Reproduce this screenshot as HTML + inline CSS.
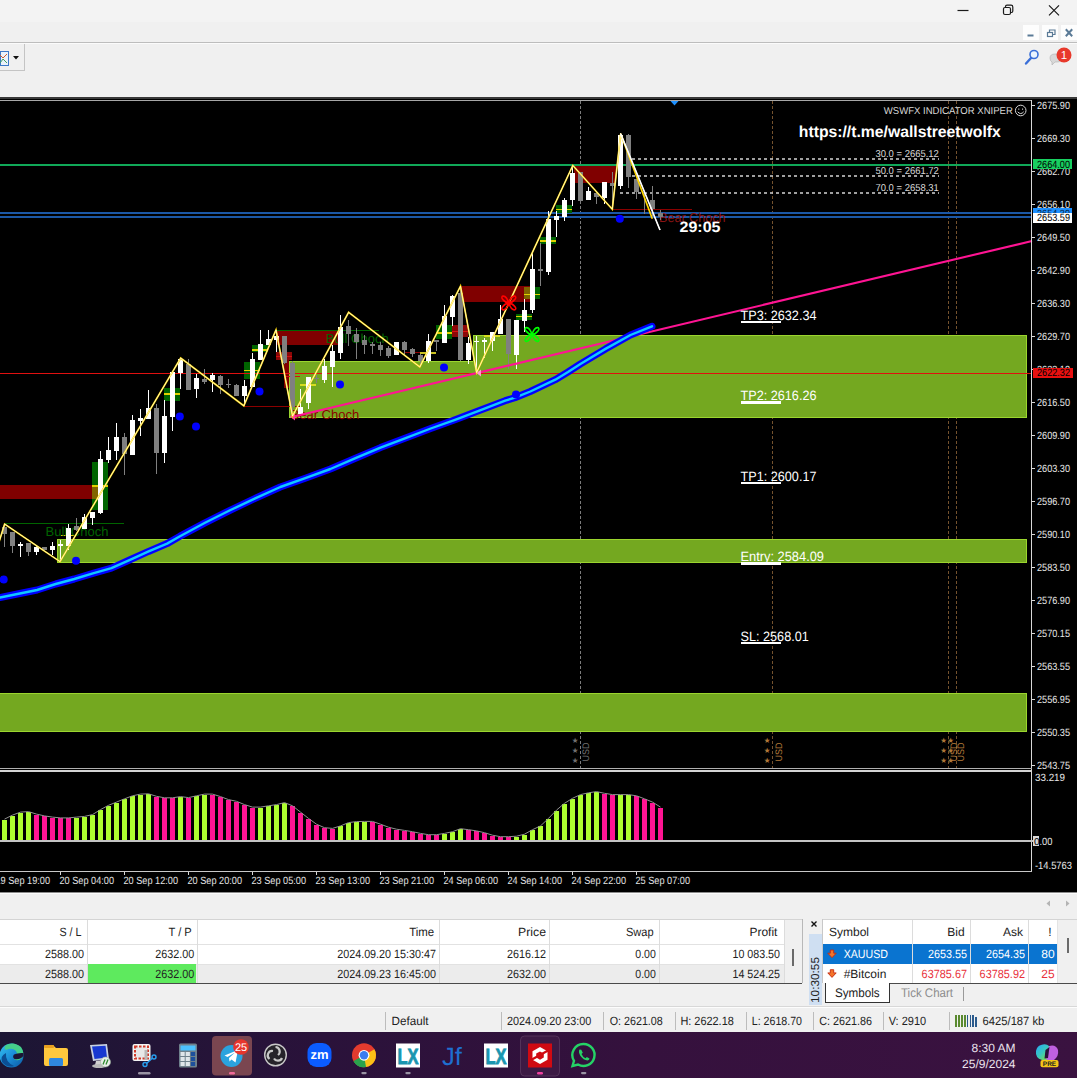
<!DOCTYPE html>
<html><head><meta charset="utf-8"><title>XAUUSD,H1</title>
<style>
html,body{margin:0;padding:0}
body{width:1077px;height:1078px;overflow:hidden;background:#f0f0f0;position:relative;font-family:"Liberation Sans",sans-serif}
svg{position:absolute;left:0;top:0}
text{font-family:"Liberation Sans",sans-serif}
.ax{font-size:10.5px;fill:#e8e8e8}
.tm{font-size:10.5px;fill:#e4e4e4}
.ui{font-size:12px;fill:#222}
.lbl{font-size:13.6px;fill:#fff}
</style></head><body>
<svg width="1077" height="1078" viewBox="0 0 1077 1078" shape-rendering="crispEdges" text-rendering="geometricPrecision">

<rect x="0" y="0" width="1077" height="22" fill="#f3f3f3"/>
<rect x="0" y="22" width="1077" height="75" fill="#f0f0f0"/>
<g stroke="#1a1a1a" stroke-width="1.2" fill="none" shape-rendering="geometricPrecision">
<path d="M957.5 10.5H968.5"/>
<rect x="1003.5" y="7.5" width="7" height="7" rx="1.5"/><path d="M1005.5 7.5V6.5Q1005.5 5.2 1007 5.2H1011Q1012.8 5.2 1012.8 7V11Q1012.8 12.5 1011.5 12.5H1010.5"/>
<path d="M1049 5.3L1059 15.3M1059 5.3L1049 15.3"/>
</g>
<rect x="1023" y="25" width="16" height="15" fill="#fdfdfd"/>
<rect x="1042" y="25" width="16" height="15" fill="#fdfdfd"/>
<rect x="1061" y="25" width="16" height="15" fill="#fdfdfd"/>
<g stroke="#5a7a96" fill="none" shape-rendering="geometricPrecision">
<path d="M1027.5 35.5H1033.5" stroke-width="2"/>
<rect x="1047.5" y="32.5" width="5" height="4" stroke-width="1.2"/><path d="M1049.5 32V30H1055V34.5H1053" stroke-width="1.2"/>
<path d="M1065.8 29.3L1072.2 36.2M1072.2 29.3L1065.8 36.2" stroke-width="2"/>
</g>
<rect x="0" y="42" width="1077" height="1" fill="#bdbdbd"/><rect x="0" y="43" width="1077" height="1" fill="#fbfbfb"/>
<path d="M0 70.5H24.5V44" stroke="#c4c4c4" fill="none"/>
<rect x="0" y="51" width="8" height="14" fill="#eaf2fb" stroke="#3d79c8"/>
<path d="M0 55L3 58L7 54" stroke="#d06030" fill="none" shape-rendering="geometricPrecision"/><path d="M0 63L3 59L7 63" stroke="#40a060" fill="none" shape-rendering="geometricPrecision"/>
<path d="M13 56H19L16 59.5Z" fill="#111" shape-rendering="geometricPrecision"/>
<g shape-rendering="geometricPrecision"><circle cx="1034" cy="54.5" r="4" fill="#eaf4ff" stroke="#3a6fd8" stroke-width="1.6"/><path d="M1031 58L1026 63.5" stroke="#3a6fd8" stroke-width="2.4" stroke-linecap="round"/></g>
<g shape-rendering="geometricPrecision"><path d="M1050 58Q1050 54 1055 54H1058Q1062 54 1062 58Q1062 62 1057 62H1055L1052 65V62Q1050 61 1050 58Z" fill="#d8d8d8" stroke="#b0b0b0" stroke-width=".6"/><circle cx="1064" cy="55" r="7.5" fill="#e8392b"/><text x="1064" y="59.2" text-anchor="middle" font-size="11.5" fill="#fff">1</text></g>
<rect x="0" y="97" width="1077" height="796" fill="#000"/>
<rect x="0" y="97" width="1077" height="2" fill="#3a3a3a"/>
<rect x="0" y="100" width="1032" height="1" fill="#a8a8a8"/>
<g id="chart">
<path d="M580.5 101V768" stroke="#7c7c7c" stroke-dasharray="3 2" fill="none"/>
<path d="M772.5 101V768" stroke="#74522e" stroke-dasharray="3 2" fill="none"/>
<path d="M948.5 101V768" stroke="#74522e" stroke-dasharray="3 2" fill="none"/>
<path d="M956.5 101V768" stroke="#74522e" stroke-dasharray="3 2" fill="none"/>
<rect x="289" y="361" width="738" height="57" fill="#74a820"/>
<rect x="473" y="335" width="554" height="83" fill="#74a820"/>
<rect x="57" y="539" width="970" height="24" fill="#74a820"/>
<rect x="0" y="693" width="1027" height="39" fill="#74a820"/>
<path d="M289 418V361.5H473M473 361V335.5H1027M1026.5 335V418M289 417.5H1027" stroke="#9bd52e" fill="none"/>
<path d="M57.5 563V539.5H1026.5V563M57 562.5H1027" stroke="#9bd52e" fill="none"/>
<path d="M0 693.5H1026.5V732M0 731.5H1027" stroke="#9bd52e" fill="none"/>
<rect x="0" y="164.2" width="1032" height="1.7" fill="#10a858"/>
<rect x="0" y="212.2" width="1032" height="1.6" fill="#1c58a6"/>
<rect x="0" y="216.4" width="1032" height="1.6" fill="#1c58a6"/>
<path d="M626 159H939" stroke="#d4d4d4" stroke-width="1.7" stroke-dasharray="3 3" fill="none" shape-rendering="geometricPrecision"/>
<path d="M626 176H939" stroke="#d4d4d4" stroke-width="1.7" stroke-dasharray="3 3" fill="none" shape-rendering="geometricPrecision"/>
<path d="M620 193H939" stroke="#d4d4d4" stroke-width="1.7" stroke-dasharray="3 3" fill="none" shape-rendering="geometricPrecision"/>
<rect x="0" y="485" width="98" height="13.5" fill="#800000"/>
<rect x="277" y="330.5" width="60.5" height="14.0" fill="#800000"/>
<rect x="461" y="285.7" width="68.5" height="15.800000000000011" fill="#800000"/>
<rect x="573.5" y="166" width="42.5" height="16.5" fill="#800000"/>
<rect x="276" y="352" width="16" height="8" fill="#8c0808"/><rect x="276" y="356" width="16" height="1.4" fill="#d01010"/>
<rect x="452" y="325" width="16" height="11.5" fill="#8c0808"/><rect x="452" y="331" width="16" height="1.4" fill="#e01010"/>
<rect x="92" y="461.5" width="16" height="48.0" fill="#006400"/>
<rect x="164" y="387.5" width="16" height="13.0" fill="#006400"/>
<rect x="244" y="361.5" width="16" height="17.0" fill="#006400"/>
<rect x="252" y="345.3" width="16" height="6.699999999999989" fill="#006400"/>
<rect x="436" y="325" width="16" height="14" fill="#006400"/>
<rect x="516" y="314" width="16" height="5.800000000000011" fill="#006400"/>
<rect x="524" y="287" width="16" height="12.199999999999989" fill="#006400"/>
<rect x="540" y="236.5" width="16" height="7.5" fill="#006400"/>
<rect x="556" y="205" width="16" height="7.699999999999989" fill="#006400"/>
<rect x="92" y="485" width="6" height="13.5" fill="#806400"/>
<rect x="524" y="287" width="5.5" height="12.2" fill="#806400"/>
<rect x="92" y="485.4" width="16" height="1.3" fill="#e0d000"/>
<rect x="164" y="393.4" width="16" height="1.3" fill="#e0d000"/>
<rect x="244" y="369.59999999999997" width="16" height="1.3" fill="#e0d000"/>
<rect x="252" y="349.4" width="16" height="1.3" fill="#e0d000"/>
<rect x="436" y="332.4" width="16" height="1.3" fill="#e0d000"/>
<rect x="516" y="315.9" width="16" height="1.3" fill="#e0d000"/>
<rect x="524" y="293.7" width="16" height="1.3" fill="#e0d000"/>
<rect x="540" y="240.4" width="16" height="1.3" fill="#e0d000"/>
<rect x="556" y="208.6" width="16" height="1.3" fill="#e0d000"/>
<rect x="61" y="534.6" width="15" height="1.3" fill="#e0d000"/>
<rect x="300" y="384.2" width="16" height="1.6" fill="#d8dc20"/>
<rect x="420" y="352" width="16" height="1.6" fill="#c8c020"/><rect x="405" y="352" width="15" height="1.4" fill="#900000"/>
<rect x="484" y="335" width="16" height="1.6" fill="#d8dc20"/>
<rect x="5" y="522.5" width="119" height="1.3" fill="#006400"/>
<rect x="277" y="330" width="102" height="1.3" fill="#006400"/>
<rect x="244" y="405.5" width="57" height="1.3" fill="#8b0000"/>
<rect x="284" y="360" width="5" height="28" fill="#800000"/><rect x="284.5" y="375.8" width="15.5" height="1.3" fill="#d01010"/>
<rect x="612" y="208.6" width="80" height="1.3" fill="#8b0000"/>
<g shape-rendering="geometricPrecision" font-size="13">
<text x="45.5" y="535.6" fill="#006400">Bull Choch</text>
<text x="325.8" y="343.4" fill="#006400">Bull Choch</text>
<text x="290.5" y="418.6" fill="#8b0000">Bear Choch</text>
<text x="659" y="222" fill="#8b1414" textLength="66.5" lengthAdjust="spacingAndGlyphs">Bear Choch</text>
</g>
<rect x="0" y="372.6" width="1032" height="1.4" fill="#e01010"/>
<rect x="3.5" y="524.0" width="1" height="23.0" fill="#808080"/>
<rect x="1.5" y="527.3" width="5" height="6.5" fill="#808080"/>
<rect x="11.5" y="532.0" width="1" height="21.3" fill="#808080"/>
<rect x="9.5" y="532.0" width="5" height="13.8" fill="#808080"/>
<rect x="19.5" y="541.8" width="1" height="15.2" fill="#ffffff"/>
<rect x="17.5" y="544.0" width="5" height="1.8" fill="#ffffff"/>
<rect x="27.5" y="542.7" width="1" height="13.3" fill="#808080"/>
<rect x="25.5" y="542.7" width="5" height="9.6" fill="#808080"/>
<rect x="35.5" y="545.8" width="1" height="9.2" fill="#ffffff"/>
<rect x="33.5" y="546.8" width="5" height="5.5" fill="#ffffff"/>
<rect x="43.5" y="546.8" width="1" height="2.8" fill="#808080"/>
<rect x="41.5" y="546.8" width="5" height="2.8" fill="#808080"/>
<rect x="51.5" y="542.0" width="1" height="13.0" fill="#ffffff"/>
<rect x="49.5" y="545.8" width="5" height="3.8" fill="#ffffff"/>
<rect x="59.5" y="540.3" width="1" height="21.3" fill="#ffffff"/>
<rect x="57.5" y="544.0" width="5" height="1.5" fill="#ffffff"/>
<rect x="67.5" y="523.6" width="1" height="26.0" fill="#ffffff"/>
<rect x="65.5" y="528.2" width="5" height="17.6" fill="#ffffff"/>
<rect x="75.5" y="518.0" width="1" height="13.0" fill="#808080"/>
<rect x="73.5" y="526.4" width="5" height="3.6" fill="#808080"/>
<rect x="83.5" y="514.0" width="1" height="15.0" fill="#ffffff"/>
<rect x="81.5" y="517.0" width="5" height="12.0" fill="#ffffff"/>
<rect x="91.5" y="512.4" width="1" height="12.1" fill="#ffffff"/>
<rect x="89.5" y="512.4" width="5" height="5.6" fill="#ffffff"/>
<rect x="99.5" y="450.7" width="1" height="63.6" fill="#ffffff"/>
<rect x="97.5" y="458.7" width="5" height="54.7" fill="#ffffff"/>
<rect x="107.5" y="436.5" width="1" height="26.0" fill="#ffffff"/>
<rect x="105.5" y="449.5" width="5" height="10.2" fill="#ffffff"/>
<rect x="115.5" y="422.6" width="1" height="37.1" fill="#ffffff"/>
<rect x="113.5" y="436.9" width="5" height="14.4" fill="#ffffff"/>
<rect x="123.5" y="432.8" width="1" height="41.8" fill="#808080"/>
<rect x="121.5" y="436.5" width="5" height="17.5" fill="#808080"/>
<rect x="131.5" y="414.8" width="1" height="39.7" fill="#ffffff"/>
<rect x="129.5" y="419.8" width="5" height="34.7" fill="#ffffff"/>
<rect x="139.5" y="408.6" width="1" height="27.0" fill="#ffffff"/>
<rect x="137.5" y="418.0" width="5" height="2.7" fill="#ffffff"/>
<rect x="147.5" y="389.7" width="1" height="29.1" fill="#ffffff"/>
<rect x="145.5" y="407.7" width="5" height="11.1" fill="#ffffff"/>
<rect x="155.5" y="404.0" width="1" height="69.6" fill="#808080"/>
<rect x="153.5" y="407.7" width="5" height="45.5" fill="#808080"/>
<rect x="163.5" y="400.3" width="1" height="62.2" fill="#ffffff"/>
<rect x="161.5" y="416.0" width="5" height="37.2" fill="#ffffff"/>
<rect x="171.5" y="372.4" width="1" height="58.6" fill="#ffffff"/>
<rect x="169.5" y="372.4" width="5" height="44.2" fill="#ffffff"/>
<rect x="179.5" y="358.5" width="1" height="30.5" fill="#ffffff"/>
<rect x="177.5" y="359.4" width="5" height="13.4" fill="#ffffff"/>
<rect x="187.5" y="359.4" width="1" height="30.3" fill="#808080"/>
<rect x="185.5" y="364.0" width="5" height="25.7" fill="#808080"/>
<rect x="195.5" y="374.3" width="1" height="23.2" fill="#ffffff"/>
<rect x="193.5" y="377.6" width="5" height="11.4" fill="#ffffff"/>
<rect x="203.5" y="368.7" width="1" height="14.9" fill="#808080"/>
<rect x="201.5" y="379.0" width="5" height="2.7" fill="#808080"/>
<rect x="211.5" y="373.4" width="1" height="18.1" fill="#ffffff"/>
<rect x="209.5" y="375.2" width="5" height="4.7" fill="#ffffff"/>
<rect x="219.5" y="375.0" width="1" height="18.8" fill="#808080"/>
<rect x="217.5" y="376.0" width="5" height="9.4" fill="#808080"/>
<rect x="227.5" y="379.0" width="1" height="9.0" fill="#808080"/>
<rect x="225.5" y="384.0" width="5" height="1.4" fill="#808080"/>
<rect x="235.5" y="383.6" width="1" height="12.0" fill="#808080"/>
<rect x="233.5" y="385.4" width="5" height="10.2" fill="#808080"/>
<rect x="243.5" y="380.0" width="1" height="25.6" fill="#ffffff"/>
<rect x="241.5" y="386.0" width="5" height="10.0" fill="#ffffff"/>
<rect x="251.5" y="353.0" width="1" height="33.5" fill="#ffffff"/>
<rect x="249.5" y="359.0" width="5" height="27.5" fill="#ffffff"/>
<rect x="259.5" y="330.4" width="1" height="29.6" fill="#ffffff"/>
<rect x="257.5" y="344.0" width="5" height="16.0" fill="#ffffff"/>
<rect x="267.5" y="330.4" width="1" height="14.8" fill="#ffffff"/>
<rect x="265.5" y="339.0" width="5" height="6.2" fill="#ffffff"/>
<rect x="275.5" y="330.0" width="1" height="22.0" fill="#ffffff"/>
<rect x="273.5" y="336.0" width="5" height="4.0" fill="#ffffff"/>
<rect x="283.5" y="336.0" width="1" height="28.0" fill="#808080"/>
<rect x="281.5" y="336.0" width="5" height="27.0" fill="#808080"/>
<rect x="291.5" y="361.0" width="1" height="55.7" fill="#808080"/>
<rect x="289.5" y="363.0" width="5" height="43.5" fill="#808080"/>
<rect x="299.5" y="388.8" width="1" height="25.2" fill="#ffffff"/>
<rect x="297.5" y="406.5" width="5" height="7.5" fill="#ffffff"/>
<rect x="307.5" y="376.8" width="1" height="32.5" fill="#ffffff"/>
<rect x="305.5" y="376.8" width="5" height="26.0" fill="#ffffff"/>
<rect x="315.5" y="375.0" width="1" height="8.3" fill="#808080"/>
<rect x="313.5" y="377.7" width="5" height="1.2" fill="#808080"/>
<rect x="323.5" y="359.0" width="1" height="24.3" fill="#ffffff"/>
<rect x="321.5" y="365.6" width="5" height="14.0" fill="#ffffff"/>
<rect x="331.5" y="345.2" width="1" height="41.8" fill="#ffffff"/>
<rect x="329.5" y="350.8" width="5" height="15.8" fill="#ffffff"/>
<rect x="339.5" y="314.6" width="1" height="44.4" fill="#ffffff"/>
<rect x="337.5" y="326.6" width="5" height="26.0" fill="#ffffff"/>
<rect x="347.5" y="320.0" width="1" height="26.0" fill="#808080"/>
<rect x="345.5" y="325.7" width="5" height="8.3" fill="#808080"/>
<rect x="355.5" y="327.6" width="1" height="31.4" fill="#808080"/>
<rect x="353.5" y="334.0" width="5" height="7.5" fill="#808080"/>
<rect x="363.5" y="335.0" width="1" height="18.6" fill="#808080"/>
<rect x="361.5" y="339.6" width="5" height="5.6" fill="#808080"/>
<rect x="371.5" y="341.5" width="1" height="12.1" fill="#808080"/>
<rect x="369.5" y="344.3" width="5" height="1.7" fill="#808080"/>
<rect x="379.5" y="341.5" width="1" height="14.9" fill="#808080"/>
<rect x="377.5" y="345.2" width="5" height="4.7" fill="#808080"/>
<rect x="387.5" y="346.0" width="1" height="12.0" fill="#808080"/>
<rect x="385.5" y="348.0" width="5" height="8.4" fill="#808080"/>
<rect x="395.5" y="341.5" width="1" height="13.9" fill="#ffffff"/>
<rect x="393.5" y="342.4" width="5" height="13.0" fill="#ffffff"/>
<rect x="403.5" y="340.6" width="1" height="14.8" fill="#808080"/>
<rect x="401.5" y="342.4" width="5" height="7.5" fill="#808080"/>
<rect x="411.5" y="348.0" width="1" height="9.3" fill="#808080"/>
<rect x="409.5" y="349.0" width="5" height="4.6" fill="#808080"/>
<rect x="419.5" y="353.6" width="1" height="13.0" fill="#808080"/>
<rect x="417.5" y="355.0" width="5" height="6.0" fill="#808080"/>
<rect x="427.5" y="334.3" width="1" height="28.3" fill="#ffffff"/>
<rect x="425.5" y="340.5" width="5" height="20.2" fill="#ffffff"/>
<rect x="435.5" y="340.4" width="1" height="10.8" fill="#808080"/>
<rect x="433.5" y="340.4" width="5" height="1.9" fill="#808080"/>
<rect x="443.5" y="305.3" width="1" height="37.2" fill="#ffffff"/>
<rect x="441.5" y="315.6" width="5" height="26.9" fill="#ffffff"/>
<rect x="451.5" y="294.6" width="1" height="31.4" fill="#ffffff"/>
<rect x="449.5" y="295.5" width="5" height="21.4" fill="#ffffff"/>
<rect x="459.5" y="286.2" width="1" height="75.2" fill="#808080"/>
<rect x="457.5" y="292.7" width="5" height="66.9" fill="#808080"/>
<rect x="467.5" y="337.3" width="1" height="26.9" fill="#ffffff"/>
<rect x="465.5" y="342.9" width="5" height="16.7" fill="#ffffff"/>
<rect x="475.5" y="336.4" width="1" height="37.1" fill="#ffffff"/>
<rect x="473.5" y="341.0" width="5" height="1.3" fill="#ffffff"/>
<rect x="483.5" y="338.2" width="1" height="19.5" fill="#ffffff"/>
<rect x="481.5" y="340.4" width="5" height="1.9" fill="#ffffff"/>
<rect x="491.5" y="331.7" width="1" height="19.5" fill="#ffffff"/>
<rect x="489.5" y="331.7" width="5" height="9.3" fill="#ffffff"/>
<rect x="499.5" y="304.8" width="1" height="28.8" fill="#ffffff"/>
<rect x="497.5" y="318.7" width="5" height="14.9" fill="#ffffff"/>
<rect x="507.5" y="318.7" width="1" height="50.1" fill="#808080"/>
<rect x="505.5" y="318.7" width="5" height="35.3" fill="#808080"/>
<rect x="515.5" y="319.6" width="1" height="49.2" fill="#ffffff"/>
<rect x="513.5" y="319.6" width="5" height="35.4" fill="#ffffff"/>
<rect x="523.5" y="299.2" width="1" height="32.5" fill="#ffffff"/>
<rect x="521.5" y="309.8" width="5" height="10.8" fill="#ffffff"/>
<rect x="531.5" y="252.3" width="1" height="60.7" fill="#ffffff"/>
<rect x="529.5" y="268.6" width="5" height="41.8" fill="#ffffff"/>
<rect x="539.5" y="243.0" width="1" height="43.0" fill="#808080"/>
<rect x="537.5" y="268.6" width="5" height="2.2" fill="#808080"/>
<rect x="547.5" y="210.5" width="1" height="64.1" fill="#ffffff"/>
<rect x="545.5" y="218.8" width="5" height="53.0" fill="#ffffff"/>
<rect x="555.5" y="211.4" width="1" height="26.0" fill="#ffffff"/>
<rect x="553.5" y="215.5" width="5" height="4.3" fill="#ffffff"/>
<rect x="563.5" y="197.5" width="1" height="23.2" fill="#ffffff"/>
<rect x="561.5" y="200.3" width="5" height="16.7" fill="#ffffff"/>
<rect x="571.5" y="166.0" width="1" height="39.8" fill="#ffffff"/>
<rect x="569.5" y="172.8" width="5" height="27.5" fill="#ffffff"/>
<rect x="579.5" y="171.5" width="1" height="32.5" fill="#808080"/>
<rect x="577.5" y="172.4" width="5" height="28.8" fill="#808080"/>
<rect x="587.5" y="187.3" width="1" height="12.7" fill="#ffffff"/>
<rect x="585.5" y="191.0" width="5" height="9.0" fill="#ffffff"/>
<rect x="595.5" y="191.0" width="1" height="13.0" fill="#808080"/>
<rect x="593.5" y="192.9" width="5" height="3.7" fill="#808080"/>
<rect x="603.5" y="181.7" width="1" height="22.3" fill="#ffffff"/>
<rect x="601.5" y="181.7" width="5" height="15.8" fill="#ffffff"/>
<rect x="611.5" y="171.5" width="1" height="38.1" fill="#808080"/>
<rect x="609.5" y="182.6" width="5" height="3.8" fill="#808080"/>
<rect x="619.5" y="133.4" width="1" height="55.6" fill="#ffffff"/>
<rect x="617.5" y="135.3" width="5" height="51.1" fill="#ffffff"/>
<rect x="627.5" y="134.4" width="1" height="53.8" fill="#808080"/>
<rect x="625.5" y="135.3" width="5" height="41.7" fill="#808080"/>
<rect x="635.5" y="179.0" width="1" height="19.5" fill="#808080"/>
<rect x="633.5" y="179.0" width="5" height="13.4" fill="#808080"/>
<rect x="643.5" y="192.0" width="1" height="22.0" fill="#808080"/>
<rect x="641.5" y="192.0" width="5" height="1.2" fill="#808080"/>
<rect x="651.5" y="186.4" width="1" height="29.6" fill="#808080"/>
<rect x="649.5" y="199.7" width="5" height="9.6" fill="#808080"/>
<rect x="659.5" y="209.5" width="1" height="10.5" fill="#808080"/>
<rect x="657.5" y="213.0" width="5" height="3.5" fill="#808080"/>
<g shape-rendering="geometricPrecision">
<path d="M293 416.7L1032 241" stroke="#ff1493" stroke-width="2.1" fill="none"/>
<path d="M290 416.5L295 412.5L295 420.5Z" fill="#ff3aa0"/><path d="M476.5 373L481 369.5L481 376.5Z" fill="#ff9ad0"/>
<polyline points="-2,598 0,597.5 18.6,593.8 37.1,590 55.7,584 74.3,579 92.9,573.3 111.4,568.1 130,559.8 148.6,551.4 167.1,543.6 180,536.2 205,522.8 230,510.3 255.2,498.3 280.3,487 305.3,478.2 330.4,469 355.5,458.2 380.5,447.6 405.6,438.1 430.7,428.5 455,419.8 480,410.3 505.2,400.7 515,397.7 530.3,391.5 555.3,379.7 568,372 580.4,364 605.5,348.9 630.5,335 652,326.3" stroke="#0000ff" stroke-width="7" fill="none" stroke-linejoin="round" stroke-linecap="round"/>
<polyline points="-2,598 0,597.5 18.6,593.8 37.1,590 55.7,584 74.3,579 92.9,573.3 111.4,568.1 130,559.8 148.6,551.4 167.1,543.6 180,536.2 205,522.8 230,510.3 255.2,498.3 280.3,487 305.3,478.2 330.4,469 355.5,458.2 380.5,447.6 405.6,438.1 430.7,428.5 455,419.8 480,410.3 505.2,400.7 515,397.7 530.3,391.5 555.3,379.7 568,372 580.4,364 605.5,348.9 630.5,335 652,326.3" stroke="#10c8ff" stroke-width="2.4" fill="none" stroke-linejoin="round" stroke-linecap="round"/>
<polyline points="-4,552 4.6,524 60,561.6 180.7,358 243.8,405.8 276,329.8 292.5,416 348.6,312.3 419.8,367 460.5,286.2 476.6,372.6 572.8,165.4 612.3,209.2 620.7,133.8 652.3,218.8" stroke="#ffd700" stroke-width="1.7" fill="none" stroke-linejoin="miter"/>
<polyline points="-4,552 4.6,524 60,561.6 180.7,358 243.8,405.8 276,329.8 292.5,416 348.6,312.3 419.8,367 460.5,286.2 476.6,372.6 572.8,165.4 612.3,209.2 620.7,133.8 660,230" stroke="#fffbe0" stroke-width=".8" fill="none"/>
<path d="M620.7 133.8L660 230" stroke="#ffffff" stroke-width="1.6" fill="none"/>
<circle cx="3.7" cy="579.6" r="4" fill="#0000ff"/>
<circle cx="76" cy="560.7" r="4" fill="#0000ff"/>
<circle cx="179.8" cy="416.6" r="4" fill="#0000ff"/>
<circle cx="196" cy="426.6" r="4" fill="#0000ff"/>
<circle cx="259.5" cy="391.5" r="4" fill="#0000ff"/>
<circle cx="340" cy="384.6" r="4" fill="#0000ff"/>
<circle cx="444" cy="367.5" r="4" fill="#0000ff"/>
<circle cx="516" cy="394.5" r="4" fill="#0000ff"/>
<circle cx="619.8" cy="218.8" r="4" fill="#0000ff"/>
<g transform="translate(508.8,303) scale(1.02,1.22)" stroke="#ff0000" stroke-width="1.5" fill="none"><path d="M0 0C-3 -8,-9 -6,-6 -3C-4 -1,-2 0,0 0C3 -8,9 -6,6 -3C4 -1,2 0,0 0C-3 8,-9 6,-6 3C-4 1,-2 0,0 0C3 8,9 6,6 3C4 1,2 0,0 0"/></g>
<g transform="translate(532,334.5) scale(1.02,1.22)" stroke="#00ff00" stroke-width="1.5" fill="none"><path d="M0 0C-3 -8,-9 -6,-6 -3C-4 -1,-2 0,0 0C3 -8,9 -6,6 -3C4 -1,2 0,0 0C-3 8,-9 6,-6 3C-4 1,-2 0,0 0C3 8,9 6,6 3C4 1,2 0,0 0"/></g>
<path d="M670.5 101H678.5L674.5 105.5Z" fill="#1e90ff"/>
</g>
<text class="lbl" x="740.5" y="319.5" textLength="76" lengthAdjust="spacingAndGlyphs" shape-rendering="geometricPrecision">TP3: 2632.34</text>
<rect x="740.5" y="321.2" width="40.5" height="2.2" fill="#fff"/>
<text class="lbl" x="740.5" y="399.7" textLength="76" lengthAdjust="spacingAndGlyphs" shape-rendering="geometricPrecision">TP2: 2616.26</text>
<rect x="740.5" y="401.4" width="40.5" height="2.2" fill="#fff"/>
<text class="lbl" x="740.5" y="480.5" textLength="76" lengthAdjust="spacingAndGlyphs" shape-rendering="geometricPrecision">TP1: 2600.17</text>
<rect x="740.5" y="482.2" width="40.5" height="2.2" fill="#fff"/>
<text class="lbl" x="740.5" y="560.7" textLength="83.5" lengthAdjust="spacingAndGlyphs" shape-rendering="geometricPrecision">Entry: 2584.09</text>
<rect x="740.5" y="562.4000000000001" width="40.5" height="2.2" fill="#fff"/>
<text class="lbl" x="740.5" y="640.5" textLength="68.3" lengthAdjust="spacingAndGlyphs" shape-rendering="geometricPrecision">SL: 2568.01</text>
<rect x="740.5" y="642.2" width="40.5" height="2.2" fill="#fff"/>
<text x="883.8" y="113.6" font-size="10" fill="#d8d8d8" textLength="129" lengthAdjust="spacingAndGlyphs">WSWFX INDICATOR XNIPER</text>
<g shape-rendering="geometricPrecision" stroke="#d8d8d8" fill="none"><circle cx="1020.7" cy="110.5" r="5.3"/><path d="M1017.7 111.8Q1020.7 115.3 1023.7 111.8"/><path d="M1018.8 108.5V109.8M1022.6 108.5V109.8"/></g>
<text x="798.8" y="136.6" font-size="16" font-weight="bold" fill="#fff" textLength="202" lengthAdjust="spacingAndGlyphs">https://t.me/wallstreetwolfx</text>
<text x="875.4" y="156.8" font-size="10" fill="#d8d8d8" textLength="63.5" lengthAdjust="spacingAndGlyphs">30.0 = 2665.12</text>
<text x="875.4" y="173.6" font-size="10" fill="#d8d8d8" textLength="63.5" lengthAdjust="spacingAndGlyphs">50.0 = 2661.72</text>
<text x="875.4" y="190.6" font-size="10" fill="#d8d8d8" textLength="63.5" lengthAdjust="spacingAndGlyphs">70.0 = 2658.31</text>
<text x="679.5" y="231.6" font-size="15" font-weight="bold" fill="#fff" textLength="41" lengthAdjust="spacingAndGlyphs">29:05</text>
<text x="575" y="742.5" font-size="7.5" fill="#707070" text-anchor="middle">★</text>
<text x="575" y="752.5" font-size="7.5" fill="#707070" text-anchor="middle">★</text>
<text x="575" y="762.5" font-size="7.5" fill="#707070" text-anchor="middle">★</text>
<text transform="translate(589,761.5) rotate(-90)" font-size="9.5" fill="#707070" textLength="19" lengthAdjust="spacingAndGlyphs">USD</text>
<text x="767" y="742.5" font-size="7.5" fill="#b07838" text-anchor="middle">★</text>
<text x="767" y="752.5" font-size="7.5" fill="#b07838" text-anchor="middle">★</text>
<text x="767" y="762.5" font-size="7.5" fill="#b07838" text-anchor="middle">★</text>
<text transform="translate(781.5,761.5) rotate(-90)" font-size="9.5" fill="#b07838" textLength="19" lengthAdjust="spacingAndGlyphs">USD</text>
<text x="943.5" y="742.5" font-size="7.5" fill="#b07838" text-anchor="middle">★</text>
<text x="943.5" y="752.5" font-size="7.5" fill="#b07838" text-anchor="middle">★</text>
<text x="943.5" y="762.5" font-size="7.5" fill="#b07838" text-anchor="middle">★</text>
<text transform="translate(957,761.5) rotate(-90)" font-size="9.5" fill="#b07838" textLength="19" lengthAdjust="spacingAndGlyphs">USD</text>
<text x="950.5" y="742.5" font-size="7.5" fill="#b07838" text-anchor="middle">★</text>
<text x="950.5" y="752.5" font-size="7.5" fill="#b07838" text-anchor="middle">★</text>
<text x="950.5" y="762.5" font-size="7.5" fill="#b07838" text-anchor="middle">★</text>
<text transform="translate(964,761.5) rotate(-90)" font-size="9.5" fill="#b07838" textLength="19" lengthAdjust="spacingAndGlyphs">USD</text>
</g>
<rect x="1031" y="100" width="1" height="772" fill="#d8d8d8"/>
<rect x="0" y="768" width="1032" height="1" fill="#b0b0b0"/><rect x="0" y="770" width="1032" height="2" fill="#d4d4d4"/>
<rect x="0" y="839.6" width="1034" height="2" fill="#c4c4c4"/>
<rect x="0" y="871" width="1032" height="1" fill="#c8c8c8"/>
<rect x="0" y="892" width="1077" height="1" fill="#8c8c8c"/>
<rect x="1032" y="105.0" width="3" height="1" fill="#d8d8d8"/>
<text class="ax" x="1037" y="109.2" textLength="33" lengthAdjust="spacingAndGlyphs">2675.90</text>
<rect x="1032" y="138.0" width="3" height="1" fill="#d8d8d8"/>
<text class="ax" x="1037" y="142.2" textLength="33" lengthAdjust="spacingAndGlyphs">2669.30</text>
<rect x="1032" y="171.0" width="3" height="1" fill="#d8d8d8"/>
<text class="ax" x="1037" y="175.2" textLength="33" lengthAdjust="spacingAndGlyphs">2662.70</text>
<rect x="1032" y="204.0" width="3" height="1" fill="#d8d8d8"/>
<text class="ax" x="1037" y="208.2" textLength="33" lengthAdjust="spacingAndGlyphs">2656.10</text>
<rect x="1032" y="237.0" width="3" height="1" fill="#d8d8d8"/>
<text class="ax" x="1037" y="241.2" textLength="33" lengthAdjust="spacingAndGlyphs">2649.50</text>
<rect x="1032" y="270.0" width="3" height="1" fill="#d8d8d8"/>
<text class="ax" x="1037" y="274.2" textLength="33" lengthAdjust="spacingAndGlyphs">2642.90</text>
<rect x="1032" y="303.0" width="3" height="1" fill="#d8d8d8"/>
<text class="ax" x="1037" y="307.2" textLength="33" lengthAdjust="spacingAndGlyphs">2636.30</text>
<rect x="1032" y="336.0" width="3" height="1" fill="#d8d8d8"/>
<text class="ax" x="1037" y="340.2" textLength="33" lengthAdjust="spacingAndGlyphs">2629.70</text>
<rect x="1032" y="369.0" width="3" height="1" fill="#d8d8d8"/>
<text class="ax" x="1037" y="373.2" textLength="33" lengthAdjust="spacingAndGlyphs">2623.10</text>
<rect x="1032" y="402.0" width="3" height="1" fill="#d8d8d8"/>
<text class="ax" x="1037" y="406.2" textLength="33" lengthAdjust="spacingAndGlyphs">2616.50</text>
<rect x="1032" y="435.0" width="3" height="1" fill="#d8d8d8"/>
<text class="ax" x="1037" y="439.2" textLength="33" lengthAdjust="spacingAndGlyphs">2609.90</text>
<rect x="1032" y="468.0" width="3" height="1" fill="#d8d8d8"/>
<text class="ax" x="1037" y="472.2" textLength="33" lengthAdjust="spacingAndGlyphs">2603.30</text>
<rect x="1032" y="501.0" width="3" height="1" fill="#d8d8d8"/>
<text class="ax" x="1037" y="505.2" textLength="33" lengthAdjust="spacingAndGlyphs">2596.70</text>
<rect x="1032" y="534.0" width="3" height="1" fill="#d8d8d8"/>
<text class="ax" x="1037" y="538.2" textLength="33" lengthAdjust="spacingAndGlyphs">2590.10</text>
<rect x="1032" y="567.0" width="3" height="1" fill="#d8d8d8"/>
<text class="ax" x="1037" y="571.2" textLength="33" lengthAdjust="spacingAndGlyphs">2583.50</text>
<rect x="1032" y="600.0" width="3" height="1" fill="#d8d8d8"/>
<text class="ax" x="1037" y="604.2" textLength="33" lengthAdjust="spacingAndGlyphs">2576.90</text>
<rect x="1032" y="633.0" width="3" height="1" fill="#d8d8d8"/>
<text class="ax" x="1037" y="637.2" textLength="33" lengthAdjust="spacingAndGlyphs">2570.15</text>
<rect x="1032" y="666.0" width="3" height="1" fill="#d8d8d8"/>
<text class="ax" x="1037" y="670.2" textLength="33" lengthAdjust="spacingAndGlyphs">2563.55</text>
<rect x="1032" y="699.0" width="3" height="1" fill="#d8d8d8"/>
<text class="ax" x="1037" y="703.2" textLength="33" lengthAdjust="spacingAndGlyphs">2556.95</text>
<rect x="1032" y="732.0" width="3" height="1" fill="#d8d8d8"/>
<text class="ax" x="1037" y="736.2" textLength="33" lengthAdjust="spacingAndGlyphs">2550.35</text>
<rect x="1032" y="765.0" width="3" height="1" fill="#d8d8d8"/>
<text class="ax" x="1037" y="769.2" textLength="33" lengthAdjust="spacingAndGlyphs">2543.75</text>
<rect x="1033" y="159" width="39" height="10" fill="#18d060"/><text x="1037" y="167.6" font-size="10.5" fill="#000" textLength="33" lengthAdjust="spacingAndGlyphs">2664.00</text>
<clipPath id="cb"><rect x="1033" y="208" width="39" height="5"/></clipPath><rect x="1033" y="208" width="39" height="5" fill="#1e90ff"/><text clip-path="url(#cb)" x="1037" y="217" font-size="10.5" fill="#06264a" textLength="33" lengthAdjust="spacingAndGlyphs">2654.39</text>
<rect x="1033" y="212.5" width="39" height="10" fill="#ffffff"/><text x="1037" y="221" font-size="10.5" fill="#000" textLength="33" lengthAdjust="spacingAndGlyphs">2653.59</text>
<rect x="1033" y="367.5" width="40" height="10.5" fill="#e81010"/><text x="1037" y="376.4" font-size="10.5" fill="#000" textLength="33" lengthAdjust="spacingAndGlyphs">2622.32</text>
<text class="ax" x="1035" y="781" textLength="30" lengthAdjust="spacingAndGlyphs">33.219</text>
<rect x="1033" y="836" width="6" height="10" fill="#d8d8d8"/><text x="1034" y="845" font-size="10" fill="#000">0</text><text class="ax" x="1039.5" y="845" textLength="13" lengthAdjust="spacingAndGlyphs">.00</text>
<text class="ax" x="1035" y="868.5" textLength="37" lengthAdjust="spacingAndGlyphs">-14.5763</text>
<rect x="2" y="819.6" width="5" height="20.6" fill="#adff2f"/>
<rect x="10" y="815.6" width="5" height="24.6" fill="#adff2f"/>
<rect x="18" y="812.6" width="5" height="27.6" fill="#adff2f"/>
<rect x="26" y="812.1" width="5" height="28.1" fill="#adff2f"/>
<rect x="34" y="814.6" width="5" height="25.6" fill="#ff1493"/>
<rect x="42" y="816.4" width="5" height="23.8" fill="#ff1493"/>
<rect x="50" y="817.6" width="5" height="22.6" fill="#ff1493"/>
<rect x="58" y="818.4" width="5" height="21.8" fill="#ff1493"/>
<rect x="66" y="818.4" width="5" height="21.8" fill="#ff1493"/>
<rect x="74" y="817.6" width="5" height="22.6" fill="#adff2f"/>
<rect x="82" y="816.9" width="5" height="23.3" fill="#adff2f"/>
<rect x="90" y="815.1" width="5" height="25.1" fill="#adff2f"/>
<rect x="98" y="810.1" width="5" height="30.1" fill="#adff2f"/>
<rect x="106" y="805.8" width="5" height="34.4" fill="#adff2f"/>
<rect x="114" y="802.6" width="5" height="37.6" fill="#adff2f"/>
<rect x="122" y="799.3" width="5" height="40.9" fill="#adff2f"/>
<rect x="130" y="796.3" width="5" height="43.9" fill="#adff2f"/>
<rect x="138" y="794.6" width="5" height="45.6" fill="#adff2f"/>
<rect x="146" y="794.3" width="5" height="45.9" fill="#adff2f"/>
<rect x="154" y="796.8" width="5" height="43.4" fill="#ff1493"/>
<rect x="162" y="798.3" width="5" height="41.9" fill="#ff1493"/>
<rect x="170" y="798.3" width="5" height="41.9" fill="#ff1493"/>
<rect x="178" y="797.1" width="5" height="43.1" fill="#adff2f"/>
<rect x="186" y="798.1" width="5" height="42.1" fill="#ff1493"/>
<rect x="194" y="796.3" width="5" height="43.9" fill="#adff2f"/>
<rect x="202" y="794.6" width="5" height="45.6" fill="#adff2f"/>
<rect x="210" y="794.6" width="5" height="45.6" fill="#ff1493"/>
<rect x="218" y="797.1" width="5" height="43.1" fill="#ff1493"/>
<rect x="226" y="800.1" width="5" height="40.1" fill="#ff1493"/>
<rect x="234" y="801.8" width="5" height="38.4" fill="#ff1493"/>
<rect x="242" y="805.1" width="5" height="35.1" fill="#ff1493"/>
<rect x="250" y="807.6" width="5" height="32.6" fill="#ff1493"/>
<rect x="258" y="807.6" width="5" height="32.6" fill="#adff2f"/>
<rect x="266" y="806.3" width="5" height="33.9" fill="#adff2f"/>
<rect x="274" y="805.1" width="5" height="35.1" fill="#adff2f"/>
<rect x="282" y="803.1" width="5" height="37.1" fill="#adff2f"/>
<rect x="290" y="806.3" width="5" height="33.9" fill="#ff1493"/>
<rect x="298" y="812.6" width="5" height="27.6" fill="#ff1493"/>
<rect x="306" y="818.9" width="5" height="21.3" fill="#ff1493"/>
<rect x="314" y="824.7" width="5" height="15.5" fill="#ff1493"/>
<rect x="322" y="828.2" width="5" height="12.0" fill="#ff1493"/>
<rect x="330" y="828.9" width="5" height="11.3" fill="#ff1493"/>
<rect x="338" y="826.4" width="5" height="13.8" fill="#adff2f"/>
<rect x="346" y="823.1" width="5" height="17.1" fill="#adff2f"/>
<rect x="354" y="822.1" width="5" height="18.1" fill="#adff2f"/>
<rect x="362" y="821.9" width="5" height="18.3" fill="#adff2f"/>
<rect x="370" y="821.9" width="5" height="18.3" fill="#ff1493"/>
<rect x="378" y="824.7" width="5" height="15.5" fill="#ff1493"/>
<rect x="386" y="827.7" width="5" height="12.5" fill="#ff1493"/>
<rect x="394" y="829.7" width="5" height="10.5" fill="#ff1493"/>
<rect x="402" y="830.9" width="5" height="9.3" fill="#ff1493"/>
<rect x="410" y="832.2" width="5" height="8.0" fill="#ff1493"/>
<rect x="418" y="833.9" width="5" height="6.3" fill="#ff1493"/>
<rect x="426" y="835.2" width="5" height="5.0" fill="#ff1493"/>
<rect x="434" y="835.2" width="5" height="5.0" fill="#ff1493"/>
<rect x="442" y="833.9" width="5" height="6.3" fill="#adff2f"/>
<rect x="450" y="832.2" width="5" height="8.0" fill="#adff2f"/>
<rect x="458" y="829.2" width="5" height="11.0" fill="#adff2f"/>
<rect x="466" y="830.2" width="5" height="10.0" fill="#ff1493"/>
<rect x="474" y="831.4" width="5" height="8.8" fill="#ff1493"/>
<rect x="482" y="833.2" width="5" height="7.0" fill="#ff1493"/>
<rect x="490" y="835.7" width="5" height="4.5" fill="#ff1493"/>
<rect x="498" y="837.2" width="5" height="3.0" fill="#ff1493"/>
<rect x="506" y="837.2" width="5" height="3.0" fill="#ff1493"/>
<rect x="514" y="836.7" width="5" height="3.5" fill="#adff2f"/>
<rect x="522" y="834.7" width="5" height="5.5" fill="#adff2f"/>
<rect x="530" y="830.2" width="5" height="10.0" fill="#adff2f"/>
<rect x="538" y="826.4" width="5" height="13.8" fill="#adff2f"/>
<rect x="546" y="818.9" width="5" height="21.3" fill="#adff2f"/>
<rect x="554" y="810.6" width="5" height="29.6" fill="#adff2f"/>
<rect x="562" y="803.8" width="5" height="36.4" fill="#adff2f"/>
<rect x="570" y="798.8" width="5" height="41.4" fill="#adff2f"/>
<rect x="578" y="795.1" width="5" height="45.1" fill="#adff2f"/>
<rect x="586" y="793.3" width="5" height="46.9" fill="#adff2f"/>
<rect x="594" y="792.1" width="5" height="48.1" fill="#adff2f"/>
<rect x="602" y="793.8" width="5" height="46.4" fill="#ff1493"/>
<rect x="610" y="795.1" width="5" height="45.1" fill="#ff1493"/>
<rect x="618" y="795.1" width="5" height="45.1" fill="#adff2f"/>
<rect x="626" y="795.1" width="5" height="45.1" fill="#adff2f"/>
<rect x="634" y="796.3" width="5" height="43.9" fill="#ff1493"/>
<rect x="642" y="799.3" width="5" height="40.9" fill="#ff1493"/>
<rect x="650" y="802.6" width="5" height="37.6" fill="#ff1493"/>
<rect x="658" y="807.6" width="5" height="32.6" fill="#ff1493"/>
<polyline shape-rendering="geometricPrecision" points="4.5,819.1 12.5,815.1 20.5,812.1 28.5,811.6 36.5,814.1 44.5,815.9 52.5,817.1 60.5,817.9 68.5,817.9 76.5,817.1 84.5,816.4 92.5,814.6 100.5,809.6 108.5,805.3 116.5,802.1 124.5,798.8 132.5,795.8 140.5,794.1 148.5,793.8 156.5,796.3 164.5,797.8 172.5,797.8 180.5,796.6 188.5,797.6 196.5,795.8 204.5,794.1 212.5,794.1 220.5,796.6 228.5,799.6 236.5,801.3 244.5,804.6 252.5,807.1 260.5,807.1 268.5,805.8 276.5,804.6 284.5,802.6 292.5,805.8 300.5,812.1 308.5,818.4 316.5,824.2 324.5,827.7 332.5,828.4 340.5,825.9 348.5,822.6 356.5,821.6 364.5,821.4 372.5,821.4 380.5,824.2 388.5,827.2 396.5,829.2 404.5,830.4 412.5,831.7 420.5,833.4 428.5,834.7 436.5,834.7 444.5,833.4 452.5,831.7 460.5,828.7 468.5,829.7 476.5,830.9 484.5,832.7 492.5,835.2 500.5,836.7 508.5,836.7 516.5,836.2 524.5,834.2 532.5,829.7 540.5,825.9 548.5,818.4 556.5,810.1 564.5,803.3 572.5,798.3 580.5,794.6 588.5,792.8 596.5,791.6 604.5,793.3 612.5,794.6 620.5,794.6 628.5,794.6 636.5,795.8 644.5,798.8 652.5,802.1 660.5,807.1" stroke="#909090" stroke-width="1" fill="none"/>
<rect x="-4" y="872" width="1" height="3" fill="#d8d8d8"/>
<text class="tm" x="-4.5" y="884.4" textLength="54.5" lengthAdjust="spacingAndGlyphs">19 Sep 19:00</text>
<rect x="60" y="872" width="1" height="3" fill="#d8d8d8"/>
<text class="tm" x="59.5" y="884.4" textLength="54.5" lengthAdjust="spacingAndGlyphs">20 Sep 04:00</text>
<rect x="124" y="872" width="1" height="3" fill="#d8d8d8"/>
<text class="tm" x="123.5" y="884.4" textLength="54.5" lengthAdjust="spacingAndGlyphs">20 Sep 12:00</text>
<rect x="188" y="872" width="1" height="3" fill="#d8d8d8"/>
<text class="tm" x="187.5" y="884.4" textLength="54.5" lengthAdjust="spacingAndGlyphs">20 Sep 20:00</text>
<rect x="252" y="872" width="1" height="3" fill="#d8d8d8"/>
<text class="tm" x="251.5" y="884.4" textLength="54.5" lengthAdjust="spacingAndGlyphs">23 Sep 05:00</text>
<rect x="316" y="872" width="1" height="3" fill="#d8d8d8"/>
<text class="tm" x="315.5" y="884.4" textLength="54.5" lengthAdjust="spacingAndGlyphs">23 Sep 13:00</text>
<rect x="380" y="872" width="1" height="3" fill="#d8d8d8"/>
<text class="tm" x="379.5" y="884.4" textLength="54.5" lengthAdjust="spacingAndGlyphs">23 Sep 21:00</text>
<rect x="444" y="872" width="1" height="3" fill="#d8d8d8"/>
<text class="tm" x="443.5" y="884.4" textLength="54.5" lengthAdjust="spacingAndGlyphs">24 Sep 06:00</text>
<rect x="508" y="872" width="1" height="3" fill="#d8d8d8"/>
<text class="tm" x="507.5" y="884.4" textLength="54.5" lengthAdjust="spacingAndGlyphs">24 Sep 14:00</text>
<rect x="572" y="872" width="1" height="3" fill="#d8d8d8"/>
<text class="tm" x="571.5" y="884.4" textLength="54.5" lengthAdjust="spacingAndGlyphs">24 Sep 22:00</text>
<rect x="636" y="872" width="1" height="3" fill="#d8d8d8"/>
<text class="tm" x="635.5" y="884.4" textLength="54.5" lengthAdjust="spacingAndGlyphs">25 Sep 07:00</text><rect x="0" y="893" width="1077" height="139" fill="#f0f0f0"/>
<rect x="0" y="893" width="1077" height="1" fill="#fcfcfc"/>
<path d="M1050 900.5V906.5L1046.5 903.5Z" fill="#b4b4b4" shape-rendering="geometricPrecision"/><path d="M1066 900.5V906.5L1069.5 903.5Z" fill="#b4b4b4" shape-rendering="geometricPrecision"/>
<rect x="0" y="919" width="802" height="1" fill="#d4d4d4"/>
<rect x="0" y="920" width="784" height="24" fill="#ffffff"/>
<rect x="0" y="944" width="784" height="20" fill="#ffffff"/>
<rect x="0" y="964" width="784" height="19" fill="#ececec"/>
<rect x="0" y="943.5" width="784" height="1" fill="#e2e2e2"/><rect x="0" y="963.5" width="784" height="1" fill="#e2e2e2"/>
<rect x="87" y="920" width="1" height="63" fill="#dcdcdc"/>
<rect x="197" y="920" width="1" height="63" fill="#dcdcdc"/>
<rect x="439" y="920" width="1" height="63" fill="#dcdcdc"/>
<rect x="549" y="920" width="1" height="63" fill="#dcdcdc"/>
<rect x="659" y="920" width="1" height="63" fill="#dcdcdc"/>
<rect x="784" y="920" width="1" height="63" fill="#dcdcdc"/>
<rect x="88" y="964" width="107.5" height="19" fill="#5eea5e"/>
<rect x="0" y="982.5" width="802" height="1.5" fill="#4a4a4a"/>
<rect x="801.5" y="919" width="1" height="64" fill="#b8b8b8"/>
<rect x="792" y="948.5" width="2" height="17" fill="#6a6a6a"/>
<g shape-rendering="geometricPrecision">
<text x="59.5" y="936.3" font-size="12" fill="#222" text-anchor="start" textLength="22" lengthAdjust="spacingAndGlyphs">S / L</text>
<text x="168.5" y="936.3" font-size="12" fill="#222" text-anchor="start" textLength="23.3" lengthAdjust="spacingAndGlyphs">T / P</text>
<text x="409.2" y="936.3" font-size="12" fill="#222" text-anchor="start" textLength="25" lengthAdjust="spacingAndGlyphs">Time</text>
<text x="518" y="936.3" font-size="12" fill="#222" text-anchor="start" textLength="28" lengthAdjust="spacingAndGlyphs">Price</text>
<text x="626.0" y="936.3" font-size="12" fill="#222" text-anchor="start" textLength="27.6" lengthAdjust="spacingAndGlyphs">Swap</text>
<text x="749.4" y="936.3" font-size="12" fill="#222" text-anchor="start" textLength="28" lengthAdjust="spacingAndGlyphs">Profit</text>
<text x="45" y="958.2" font-size="12" fill="#222" text-anchor="start" textLength="39" lengthAdjust="spacingAndGlyphs">2588.00</text>
<text x="155.3" y="958.2" font-size="12" fill="#222" text-anchor="start" textLength="39" lengthAdjust="spacingAndGlyphs">2632.00</text>
<text x="337.2" y="958.2" font-size="12" fill="#222" text-anchor="start" textLength="98.8" lengthAdjust="spacingAndGlyphs">2024.09.20 15:30:47</text>
<text x="507" y="958.2" font-size="12" fill="#222" text-anchor="start" textLength="39" lengthAdjust="spacingAndGlyphs">2616.12</text>
<text x="635.3" y="958.2" font-size="12" fill="#222" text-anchor="start" textLength="20.5" lengthAdjust="spacingAndGlyphs">0.00</text>
<text x="732.5" y="958.2" font-size="12" fill="#222" text-anchor="start" textLength="47.5" lengthAdjust="spacingAndGlyphs">10 083.50</text>
<text x="45" y="977.8" font-size="12" fill="#222" text-anchor="start" textLength="39" lengthAdjust="spacingAndGlyphs">2588.00</text>
<text x="155.3" y="977.8" font-size="12" fill="#222" text-anchor="start" textLength="39" lengthAdjust="spacingAndGlyphs">2632.00</text>
<text x="337.2" y="977.8" font-size="12" fill="#222" text-anchor="start" textLength="98.8" lengthAdjust="spacingAndGlyphs">2024.09.23 16:45:00</text>
<text x="507" y="977.8" font-size="12" fill="#222" text-anchor="start" textLength="39" lengthAdjust="spacingAndGlyphs">2632.00</text>
<text x="635.3" y="977.8" font-size="12" fill="#222" text-anchor="start" textLength="20.5" lengthAdjust="spacingAndGlyphs">0.00</text>
<text x="732.5" y="977.8" font-size="12" fill="#222" text-anchor="start" textLength="47.5" lengthAdjust="spacingAndGlyphs">14 524.25</text>
</g>
<path d="M811.5 921.5L816.5 926.5M816.5 921.5L811.5 926.5" stroke="#111" stroke-width="1.4" shape-rendering="geometricPrecision"/>
<rect x="809" y="933.5" width="12.5" height="71" fill="#cfdff2"/>
<text transform="translate(819.3,1003) rotate(-90)" font-size="11.5" fill="#222" shape-rendering="geometricPrecision" textLength="46" lengthAdjust="spacingAndGlyphs">10:30:55</text>
<rect x="822" y="919" width="255" height="1" fill="#d4d4d4"/>
<rect x="822.5" y="920" width="234.5" height="23.5" fill="#fff"/>
<rect x="822.5" y="943.5" width="234.5" height="20.2" fill="#0a74d0"/>
<rect x="822.5" y="963.7" width="234.5" height="19" fill="#fff"/>
<rect x="912" y="920" width="1" height="63" fill="#dcdcdc"/>
<rect x="970" y="920" width="1" height="63" fill="#dcdcdc"/>
<rect x="1028" y="920" width="1" height="63" fill="#dcdcdc"/>
<rect x="1057" y="920" width="1" height="63" fill="#e4e4e4"/>
<rect x="1066.5" y="937.5" width="2" height="15.5" fill="#6a6a6a"/>
<rect x="822" y="919" width="1" height="64" fill="#c8c8c8"/>
<g shape-rendering="geometricPrecision">
<text x="829" y="936.3" font-size="12" fill="#222" text-anchor="start" >Symbol</text>
<text x="964.6" y="936.3" font-size="12" fill="#222" text-anchor="end" >Bid</text>
<text x="1023" y="936.3" font-size="12" fill="#222" text-anchor="end" >Ask</text>
<text x="1051.5" y="936.3" font-size="12" fill="#222" text-anchor="end" >!</text>
<text x="843.7" y="958.2" font-size="12" fill="#fff" text-anchor="start" textLength="44.3" lengthAdjust="spacingAndGlyphs">XAUUSD</text>
<text x="928" y="958.2" font-size="12" fill="#fff" text-anchor="start" textLength="39" lengthAdjust="spacingAndGlyphs">2653.55</text>
<text x="986" y="958.2" font-size="12" fill="#fff" text-anchor="start" textLength="39" lengthAdjust="spacingAndGlyphs">2654.35</text>
<text x="1054.6" y="958.2" font-size="12" fill="#fff" text-anchor="end" >80</text>
<text x="843.7" y="977.8" font-size="12" fill="#222" text-anchor="start" >#Bitcoin</text>
<text x="921.6" y="977.8" font-size="12" fill="#e8303a" text-anchor="start" textLength="45.4" lengthAdjust="spacingAndGlyphs">63785.67</text>
<text x="979.6" y="977.8" font-size="12" fill="#e8303a" text-anchor="start" textLength="45.4" lengthAdjust="spacingAndGlyphs">63785.92</text>
<text x="1054.6" y="977.8" font-size="12" fill="#e8303a" text-anchor="end" >25</text>
<path d="M830.3 950.0H833.7V953.2H836.2L832 957.7L827.8 953.2H830.3Z" fill="#f4742a" stroke="#c42a10" stroke-width=".9"/>
<path d="M830.3 969.7H833.7V972.9000000000001H836.2L832 977.4000000000001L827.8 972.9000000000001H830.3Z" fill="#f4742a" stroke="#c42a10" stroke-width=".9"/>
</g>
<rect x="889" y="982.5" width="188" height="1.5" fill="#4a4a4a"/>
<path d="M825.5 983V1002.5H889.5V983" stroke="#333" stroke-width="1.4" fill="#fff"/>
<rect x="826.3" y="982" width="62.5" height="3" fill="#fff"/>
<g shape-rendering="geometricPrecision">
<text x="835" y="997.3" font-size="12.5" fill="#222" text-anchor="start" textLength="44.7" lengthAdjust="spacingAndGlyphs">Symbols</text>
<text x="901" y="997.3" font-size="12.5" fill="#8c8c8c" text-anchor="start" textLength="52" lengthAdjust="spacingAndGlyphs">Tick Chart</text>
</g>
<rect x="963" y="987" width="1" height="14" fill="#9a9a9a"/>
<rect x="0" y="1007" width="1077" height="1" fill="#fdfdfd"/><rect x="0" y="1006" width="1077" height="1" fill="#d8d8d8"/>
<rect x="385" y="1012" width="1" height="18" fill="#bcbcbc"/>
<rect x="501" y="1012" width="1" height="18" fill="#bcbcbc"/>
<rect x="603" y="1012" width="1" height="18" fill="#bcbcbc"/>
<rect x="674.5" y="1012" width="1" height="18" fill="#bcbcbc"/>
<rect x="745.5" y="1012" width="1" height="18" fill="#bcbcbc"/>
<rect x="813" y="1012" width="1" height="18" fill="#bcbcbc"/>
<rect x="883" y="1012" width="1" height="18" fill="#bcbcbc"/>
<rect x="949" y="1012" width="1" height="18" fill="#bcbcbc"/>
<g shape-rendering="geometricPrecision">
<text x="391.6" y="1025.3" font-size="12" fill="#222" text-anchor="start" textLength="37" lengthAdjust="spacingAndGlyphs">Default</text>
<text x="507" y="1025.3" font-size="12" fill="#222" text-anchor="start" textLength="84.4" lengthAdjust="spacingAndGlyphs">2024.09.20 23:00</text>
<text x="609.7" y="1025.3" font-size="12" fill="#222" text-anchor="start" textLength="53.1" lengthAdjust="spacingAndGlyphs">O: 2621.08</text>
<text x="680.4" y="1025.3" font-size="12" fill="#222" text-anchor="start" textLength="53.4" lengthAdjust="spacingAndGlyphs">H: 2622.18</text>
<text x="751.8" y="1025.3" font-size="12" fill="#222" text-anchor="start" textLength="50.2" lengthAdjust="spacingAndGlyphs">L: 2618.70</text>
<text x="819.3" y="1025.3" font-size="12" fill="#222" text-anchor="start" textLength="52.7" lengthAdjust="spacingAndGlyphs">C: 2621.86</text>
<text x="888.7" y="1025.3" font-size="12" fill="#222" text-anchor="start" textLength="37.4" lengthAdjust="spacingAndGlyphs">V: 2910</text>
<text x="982.6" y="1025.3" font-size="12" fill="#222" text-anchor="start" textLength="61.7" lengthAdjust="spacingAndGlyphs">6425/187 kb</text>
</g>
<rect x="955.0" y="1015" width="1.8" height="12" fill="#5a8a30"/>
<rect x="957.9" y="1015" width="1.8" height="12" fill="#5a8a30"/>
<rect x="960.8" y="1015" width="1.8" height="12" fill="#5a8a30"/>
<rect x="963.7" y="1015" width="1.8" height="12" fill="#5a8a30"/>
<rect x="966.6" y="1015" width="1.8" height="12" fill="#2a5a8c"/>
<rect x="969.5" y="1015" width="1.8" height="12" fill="#2a5a8c"/>
<rect x="972.4" y="1015" width="1.8" height="12" fill="#2a5a8c"/>
<rect x="975.3" y="1017" width="1.8" height="10" fill="#2a5a8c"/>
<defs><linearGradient id="tb" x1="0" x2="1" y1="0" y2="0"><stop offset="0" stop-color="#1c1634"/><stop offset=".3" stop-color="#2a123a"/><stop offset=".6" stop-color="#35113d"/><stop offset="1" stop-color="#3a1240"/></linearGradient>
<linearGradient id="edge" x1="0" x2="1" y1="0" y2="1"><stop offset="0" stop-color="#35c1f1"/><stop offset=".5" stop-color="#1b8fd8"/><stop offset="1" stop-color="#0c59a4"/></linearGradient>
<linearGradient id="cop" x1="0" x2="1" y1="0" y2="1"><stop offset="0" stop-color="#28a8f8"/><stop offset=".45" stop-color="#38c8c0"/><stop offset=".75" stop-color="#70d860"/><stop offset="1" stop-color="#f0d040"/></linearGradient></defs>
<rect x="0" y="1032" width="1077" height="46" fill="url(#tb)"/>
<g shape-rendering="geometricPrecision">
<circle cx="11.5" cy="1055.5" r="12" fill="url(#edge)"/><path d="M6 1045Q14 1041 21 1047Q25 1053 22 1058Q18 1062 14 1059Q19 1056 16 1051Q12 1047 6 1050Q3 1048 6 1045Z" fill="#45cf8a"/><path d="M14.5 1059Q20 1060 23.3 1056L23.5 1053Q18 1052.5 14 1054.5Q12 1057 14.5 1059Z" fill="#1c1634"/><path d="M6 1053Q5 1062 14 1066Q7 1068 2 1062Q0 1056 6 1053Z" fill="#0b4f94"/>
<path d="M44 1047Q44 1045 46 1045H53L56 1048H66Q68 1048 68 1050V1064Q68 1066 66 1066H46Q44 1066 44 1064Z" fill="#ffc83d"/><rect x="44" y="1045" width="10" height="3" rx="1" fill="#e8a020"/><rect x="49" y="1058" width="14" height="8" rx="1.5" fill="#2f88e0"/>
<path d="M90 1045L107 1044L109 1059L93 1061Z" fill="#c8d0e0"/><path d="M92 1046.5L105.5 1045.8L107 1057.5L94.5 1059Z" fill="#1838d0"/><path d="M96 1061L104 1060L106 1065H95Z" fill="#d0d0d0"/><ellipse cx="99" cy="1066" rx="7" ry="2" fill="#b8b8b8"/><circle cx="105.5" cy="1062" r="5" fill="#e8efe8" stroke="#9ab09a" stroke-width=".6"/><path d="M103 1064.5L105 1059.5M106 1064.5L108 1059.5" stroke="#2e8b2e" stroke-width="1.3"/>
<rect x="132.5" y="1044" width="18" height="17" rx="2" fill="#f4f4f4"/><rect x="135" y="1046.5" width="13" height="12" fill="#e8e8e8" stroke="#d03a2a" stroke-width="2" stroke-dasharray="2.5 1.5"/><path d="M146 1050V1060" stroke="#b8b8b8" stroke-width="3"/><circle cx="154" cy="1057" r="2" fill="none" stroke="#28a0f0" stroke-width="1.4"/><circle cx="145" cy="1064.5" r="2" fill="none" stroke="#28a0f0" stroke-width="1.4"/><path d="M146.5 1063.5L152.5 1058" stroke="#28a0f0" stroke-width="1.4"/>
<rect x="138" y="1072" width="12.5" height="2.4" rx="1.2" fill="#9a94a4"/>
<rect x="179" y="1043.5" width="18" height="24" rx="1.5" fill="#6f818c"/><rect x="180.5" y="1045.5" width="15" height="5" fill="#4cc2ff"/>
<rect x="180.5" y="1052.0" width="4.2" height="4" fill="#dfe6ea"/>
<rect x="185.7" y="1052.0" width="4.2" height="4" fill="#dfe6ea"/>
<rect x="190.9" y="1052.0" width="4.2" height="4" fill="#1d4f9c"/>
<rect x="180.5" y="1057.0" width="4.2" height="4" fill="#dfe6ea"/>
<rect x="185.7" y="1057.0" width="4.2" height="4" fill="#dfe6ea"/>
<rect x="190.9" y="1057.0" width="4.2" height="4" fill="#1d4f9c"/>
<rect x="180.5" y="1062.0" width="4.2" height="4" fill="#dfe6ea"/>
<rect x="185.7" y="1062.0" width="4.2" height="4" fill="#dfe6ea"/>
<rect x="190.9" y="1062.0" width="4.2" height="4" fill="#1d4f9c"/>
<rect x="212" y="1036" width="40" height="39.5" rx="4" fill="#7a4650"/>
<circle cx="231.5" cy="1056" r="11" fill="#2aa3de"/><path d="M224.5 1055.5L238 1050L235.5 1062.5L231.5 1059.5L229.5 1061.5L229 1058L235 1052.5L227.5 1057Z" fill="#fff"/>
<circle cx="241" cy="1047" r="7.8" fill="#e7352c"/><text x="241" y="1051" font-size="11" fill="#fff" text-anchor="middle">25</text>
<rect x="229" y="1072" width="6" height="2.4" rx="1.2" fill="#f06a9a"/>
<circle cx="275.5" cy="1055" r="10.8" fill="#26242a" stroke="#c8c8c8" stroke-width="1.4"/><path d="M275.5 1047A4.5 4.5 0 0 1 278 1055M282 1058A4.5 4.5 0 0 1 274 1058.5M269.5 1059A4.5 4.5 0 0 1 273 1051" stroke="#c8c8c8" stroke-width="2.2" fill="none"/>
<rect x="307.5" y="1043" width="24" height="24" rx="9" fill="#0b5cff"/><text x="319.5" y="1059" font-size="13" font-weight="bold" fill="#fff" text-anchor="middle">zm</text>
<circle cx="364" cy="1055.3" r="12" fill="#e33b2e"/><path d="M364 1055.3L353.6 1061.3A12 12 0 0 0 364 1067.3L370 1057Z" fill="#2ba24c"/><path d="M364 1055.3L353.6 1061.3A12 12 0 0 0 366 1067.1L371 1058Z" fill="#2ba24c"/><path d="M364 1055.3L374.4 1049.3A12 12 0 0 1 366 1067.1Z" fill="#fbc116"/><circle cx="364" cy="1055.3" r="5.4" fill="#fff"/><circle cx="364" cy="1055.3" r="4.2" fill="#3b7cf0"/>
<rect x="361.3" y="1072" width="5.4" height="2.2" rx="1.1" fill="#9a94a4"/>
<rect x="396" y="1043.5" width="24" height="24" fill="#fff"/><text x="408" y="1064" font-size="22" font-weight="bold" fill="#1a96b0" stroke="#1a96b0" stroke-width=".9" text-anchor="middle" textLength="21" lengthAdjust="spacingAndGlyphs">LX</text>
<rect x="484" y="1043.5" width="24" height="24" fill="#fff"/><text x="496" y="1064" font-size="22" font-weight="bold" fill="#1a96b0" stroke="#1a96b0" stroke-width=".9" text-anchor="middle" textLength="21" lengthAdjust="spacingAndGlyphs">LX</text>
<rect x="405.3" y="1072" width="5.4" height="2.2" rx="1.1" fill="#9a94a4"/>
<text x="442" y="1065" font-size="25" fill="#1e6fd0" textLength="20" lengthAdjust="spacingAndGlyphs">Jf</text>
<rect x="520.5" y="1036" width="39" height="40" rx="4" fill="#3c1a44" stroke="#5a3a60" stroke-width=".8"/>
<rect x="528" y="1043.5" width="24" height="24" fill="#d00a12"/><path d="M540 1047L547.5 1051.2V1059.8L540 1064L532.5 1059.8V1051.2Z" fill="#fff"/><path d="M540 1051.5L543.8 1053.6V1057.6L540 1059.7L536.2 1057.6V1053.6Z" fill="#d00a12"/><path d="M531 1060L549 1050" stroke="#d00a12" stroke-width="2.2"/>
<rect x="537" y="1072" width="6" height="2.4" rx="1.2" fill="#f040a0"/>
<path d="M583.6 1044A11 11 0 1 1 578 1064.5L572.5 1066L574 1060.8A11 11 0 0 1 583.6 1044Z" fill="none" stroke="#25d366" stroke-width="2.4"/><path d="M579.5 1049.5Q578 1052 580.5 1056Q583.5 1060 587.5 1060.5Q589.5 1060 589.5 1058.5L586.8 1057L585.5 1058.3Q582.8 1057 581.5 1054L582.8 1052.8L581.3 1049.8Z" fill="#25d366"/>
<rect x="581" y="1072" width="5.4" height="2.2" rx="1.1" fill="#9a94a4"/>
<text x="1015.5" y="1052" font-size="12" fill="#ece4ee" text-anchor="end">8:30 AM</text><text x="1015.5" y="1067.8" font-size="12" fill="#ece4ee" text-anchor="end">25/9/2024</text>
<path d="M1041 1045Q1046 1043 1049 1046L1052 1057Q1048 1062 1042 1060Q1035 1058 1036 1051Q1037 1046 1041 1045Z" fill="url(#cop)"/><path d="M1049 1046Q1056 1044 1058 1050Q1059 1056 1054 1060Q1050 1062 1046 1059L1049 1046Z" fill="#c060e0"/><path d="M1045.5 1050L1049.5 1047L1048 1058L1044.5 1058.5Z" fill="#2a123a"/>
<rect x="1040.5" y="1060" width="18" height="7.2" rx="2" fill="#f5c518"/><text x="1049.5" y="1066.2" font-size="6.5" font-weight="bold" fill="#222" text-anchor="middle">PRE</text>
</g>
</svg></body></html>
